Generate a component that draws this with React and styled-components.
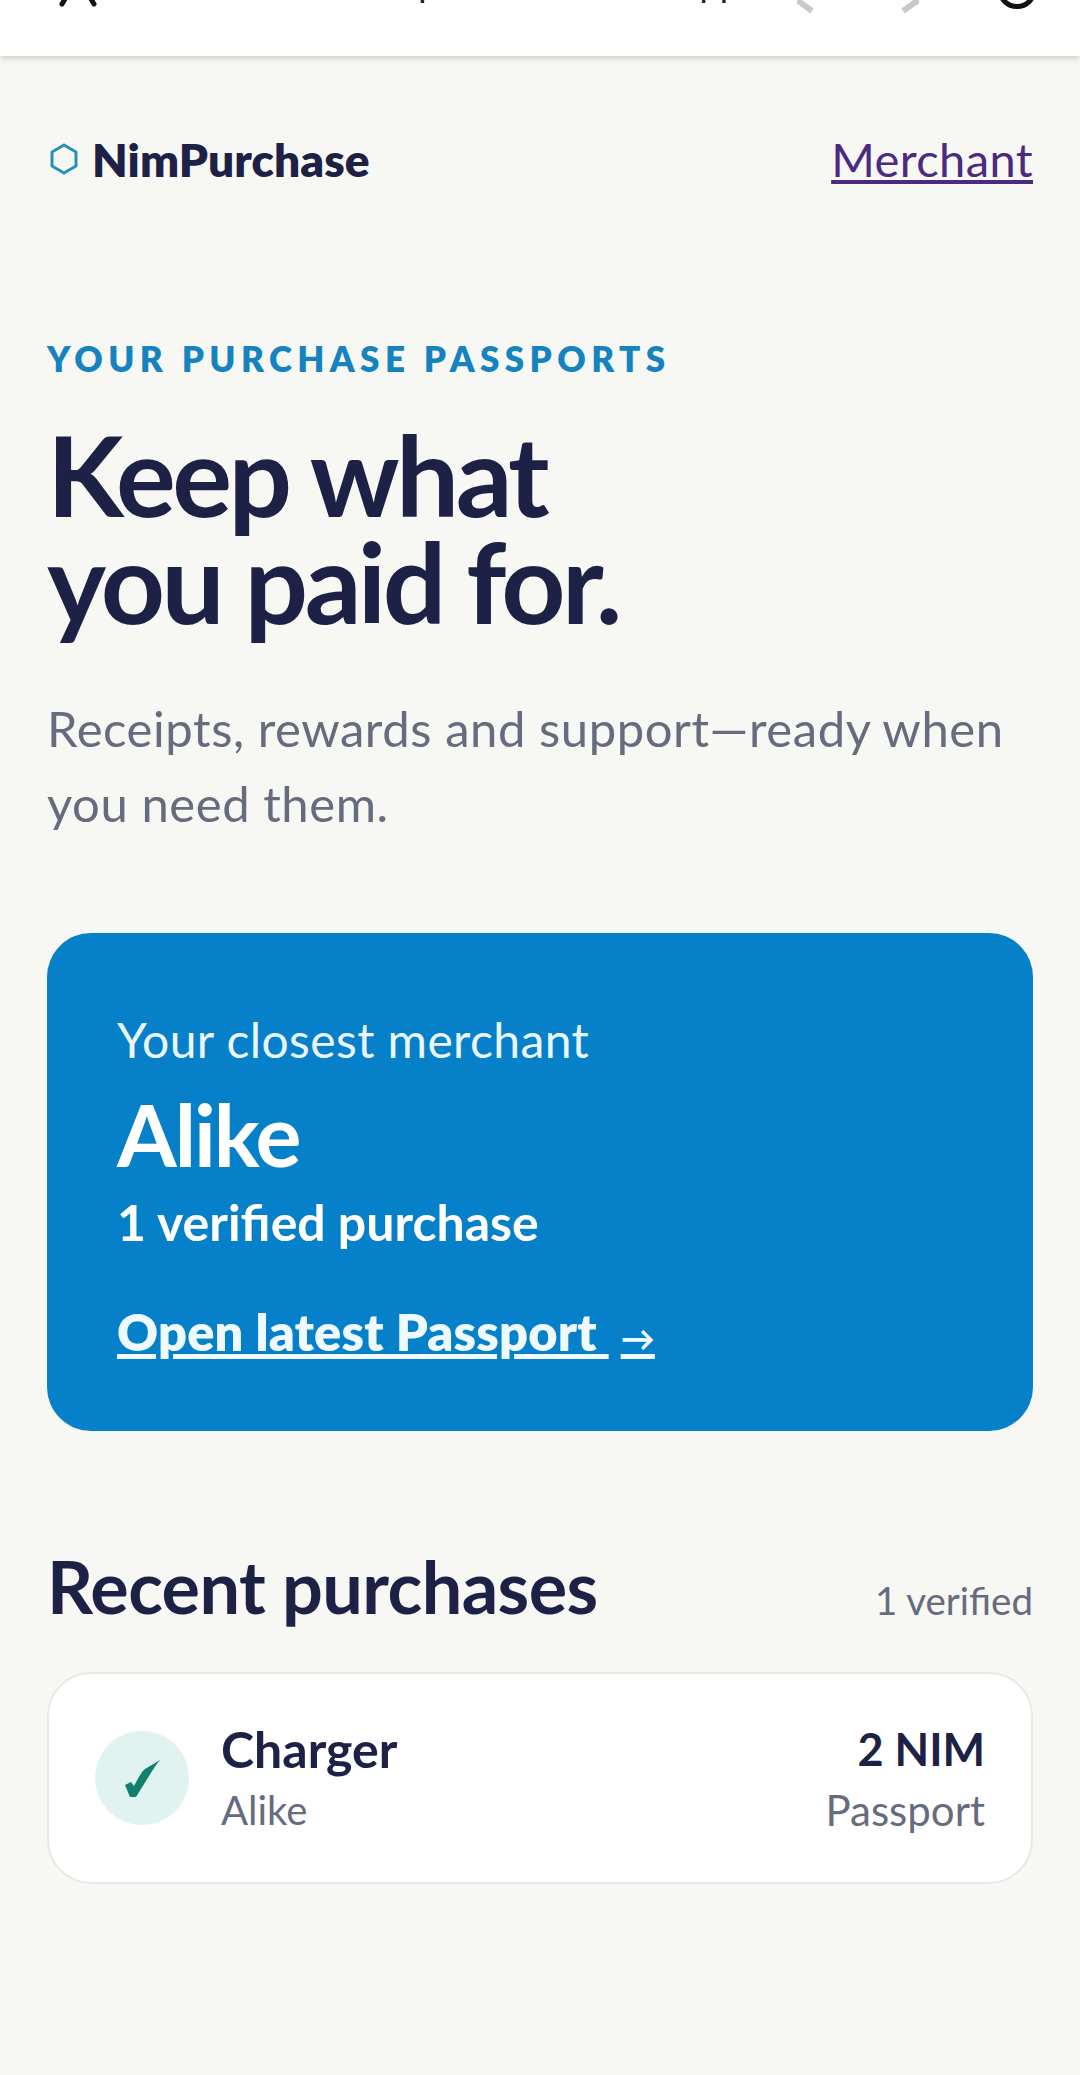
import React from 'react';
import styled, { createGlobalStyle } from 'styled-components';

const GlobalStyle = createGlobalStyle`
  html, body {
    margin: 0;
    padding: 0;
    background: #f7f7f4;
  }
  body {
    font-family: Lato, "Open Sans", sans-serif;
  }
`;

const Screen = styled.div`
  width: 1080px;
  height: 2075px;
  overflow: hidden;
`;

const BrowserBar = styled.div`
  height: 56px;
  background: #fff;
  box-shadow: 0 2px 6px rgba(0, 0, 0, 0.18);
  display: flex;
  align-items: flex-start;
  overflow: hidden;
  padding: 0 43px 0 56px;
`;

const UrlText = styled.div`
  margin: -37px 0 0 258px;
  font-family: Roboto, sans-serif;
  font-size: 36px;
  line-height: 40px;
  width: 373px;
  white-space: nowrap;
  color: #222;
`;

const BarIcons = styled.div`
  margin-left: auto;
  display: flex;
  gap: 78px;
`;

const Page = styled.main`
  padding: 0 47px;
`;

const Header = styled.header`
  display: flex;
  justify-content: space-between;
  align-items: center;
  padding-top: 75px;
`;

const Logo = styled.div`
  display: flex;
  align-items: center;
  gap: 14px;
  padding-left: 3px;
  font-size: 46px;
  font-weight: 800;
  letter-spacing: 0.1px;
  color: #1d2145;
`;

const MerchantLink = styled.a`
  font-size: 47px;
  letter-spacing: 0.4px;
  color: #4b2a7f;
  text-decoration: underline;
`;

const Eyebrow = styled.div`
  margin-top: 150px;
  font-size: 35px;
  font-weight: 800;
  letter-spacing: 5.4px;
  color: #1583bf;
`;

const Title = styled.h1`
  margin: 41px 0 0;
  font-size: 112px;
  line-height: 107px;
  font-weight: 700;
  letter-spacing: -3.6px;
  color: #1d2145;
`;

const Lead = styled.p`
  margin: 57px 0 0;
  font-size: 49px;
  line-height: 75px;
  letter-spacing: 0.55px;
  color: #676b7e;
`;

const Hero = styled.section`
  margin-top: 92px;
  height: 498px;
  box-sizing: border-box;
  padding: 79px 70px 0;
  background: #0680c9;
  border-radius: 44px;
  color: #fff;
`;

const HeroLabel = styled.div`
  font-size: 48px;
  line-height: 56px;
  letter-spacing: 0.4px;
  color: #eaf6fc;
`;

const HeroName = styled.div`
  margin-top: 20px;
  font-size: 86px;
  line-height: 92px;
  font-weight: 700;
  letter-spacing: -2px;
`;

const HeroCount = styled.div`
  margin-top: 14px;
  font-size: 50px;
  line-height: 56px;
  font-weight: 700;
`;

const HeroLink = styled.a`
  display: inline-block;
  margin-top: 54px;
  font-size: 50.5px;
  line-height: 56px;
  font-weight: 800;
  letter-spacing: 0.2px;
  color: #eefaff;
  text-decoration: underline;
`;

const LinkArrow = styled.span`
  font-size: 34px;
  font-weight: 700;
  padding-left: 12px;
`;

const SectionHead = styled.div`
  margin-top: 117px;
  display: flex;
  justify-content: space-between;
  align-items: flex-end;
`;

const SectionTitle = styled.h2`
  margin: 0;
  font-size: 72px;
  line-height: 76px;
  font-weight: 700;
  letter-spacing: -0.6px;
  color: #1d2145;
`;

const SectionCount = styled.span`
  font-size: 38.5px;
  line-height: 48px;
  color: #676b7e;
`;

const PurchaseCard = styled.article`
  margin-top: 48px;
  height: 212px;
  box-sizing: border-box;
  padding: 0 46px;
  display: flex;
  align-items: center;
  gap: 32px;
  background: #fff;
  border: 2px solid #e8e8e6;
  border-radius: 44px;
`;

const CheckBadge = styled.div`
  width: 94px;
  height: 94px;
  flex: none;
  display: flex;
  align-items: center;
  justify-content: center;
  border-radius: 50%;
  background: #e0f3f0;
`;

const Info = styled.div`
  display: flex;
  flex-direction: column;
  gap: 8px;
  padding-top: 2px;
  align-items: ${p => (p.$end ? 'flex-end' : 'flex-start')};
  flex-grow: ${p => (p.$end ? 0 : 1)};
`;

const Strong = styled.div`
  font-size: ${p => p.$size || 44}px;
  line-height: 54px;
  font-weight: 700;
  color: #1d2145;
`;

const Muted = styled.div`
  font-size: ${p => p.$size || 38}px;
  line-height: 52px;
  color: #676b7e;
`;

export default function App() {
  return (
    <Screen>
      <GlobalStyle />
      <BrowserBar>
        <svg width="44" height="8" viewBox="0 0 44 8">
          <path d="M6 4 L18 -16 M38 4 L26 -16" stroke="#111" strokeWidth="5" strokeLinecap="round" />
        </svg>
        <UrlText>nimpurchase.vercel.app</UrlText>
        <BarIcons>
          <svg width="22" height="14" viewBox="0 0 22 14">
            <path d="M-3 -2 L15 11" stroke="#c9c9c9" strokeWidth="6" />
          </svg>
          <svg width="22" height="14" viewBox="0 0 22 14">
            <path d="M6 11 L24 -2" stroke="#c9c9c9" strokeWidth="6" />
          </svg>
          <svg width="40" height="10" viewBox="0 0 40 10">
            <circle cx="20" cy="-11" r="17.5" fill="none" stroke="#111" strokeWidth="5" />
          </svg>
        </BarIcons>
      </BrowserBar>
      <Page>
        <Header>
          <Logo>
            <svg width="28" height="32" viewBox="0 0 28 32" fill="none">
              <path d="M14 2 L26 9 V23 L14 30 L2 23 V9 Z" stroke="#2a8fb8" strokeWidth="3" strokeLinejoin="round" />
            </svg>
            NimPurchase
          </Logo>
          <MerchantLink href="#">Merchant</MerchantLink>
        </Header>
        <Eyebrow>YOUR PURCHASE PASSPORTS</Eyebrow>
        <Title>Keep what<br />you paid for.</Title>
        <Lead>Receipts, rewards and support—ready when you need them.</Lead>
        <Hero>
          <HeroLabel>Your closest merchant</HeroLabel>
          <HeroName>Alike</HeroName>
          <HeroCount>1 verified purchase</HeroCount>
          <HeroLink href="#">Open latest Passport <LinkArrow>→</LinkArrow></HeroLink>
        </Hero>
        <SectionHead>
          <SectionTitle>Recent purchases</SectionTitle>
          <SectionCount>1 verified</SectionCount>
        </SectionHead>
        <PurchaseCard>
          <CheckBadge>
            <svg width="37" height="39" viewBox="0 0 37 39">
              <path d="M1 26 L7 23 L10 27 C14 19 19 11 21 10 L36 1 C31 7 28 12 25 17 L12 38 L6 38 Z" fill="#137f6e" />
            </svg>
          </CheckBadge>
          <Info>
            <Strong $size={50}>Charger</Strong>
            <Muted $size={40}>Alike</Muted>
          </Info>
          <Info $end>
            <Strong $size={45}>2 NIM</Strong>
            <Muted $size={42}>Passport</Muted>
          </Info>
        </PurchaseCard>
      </Page>
    </Screen>
  );
}
